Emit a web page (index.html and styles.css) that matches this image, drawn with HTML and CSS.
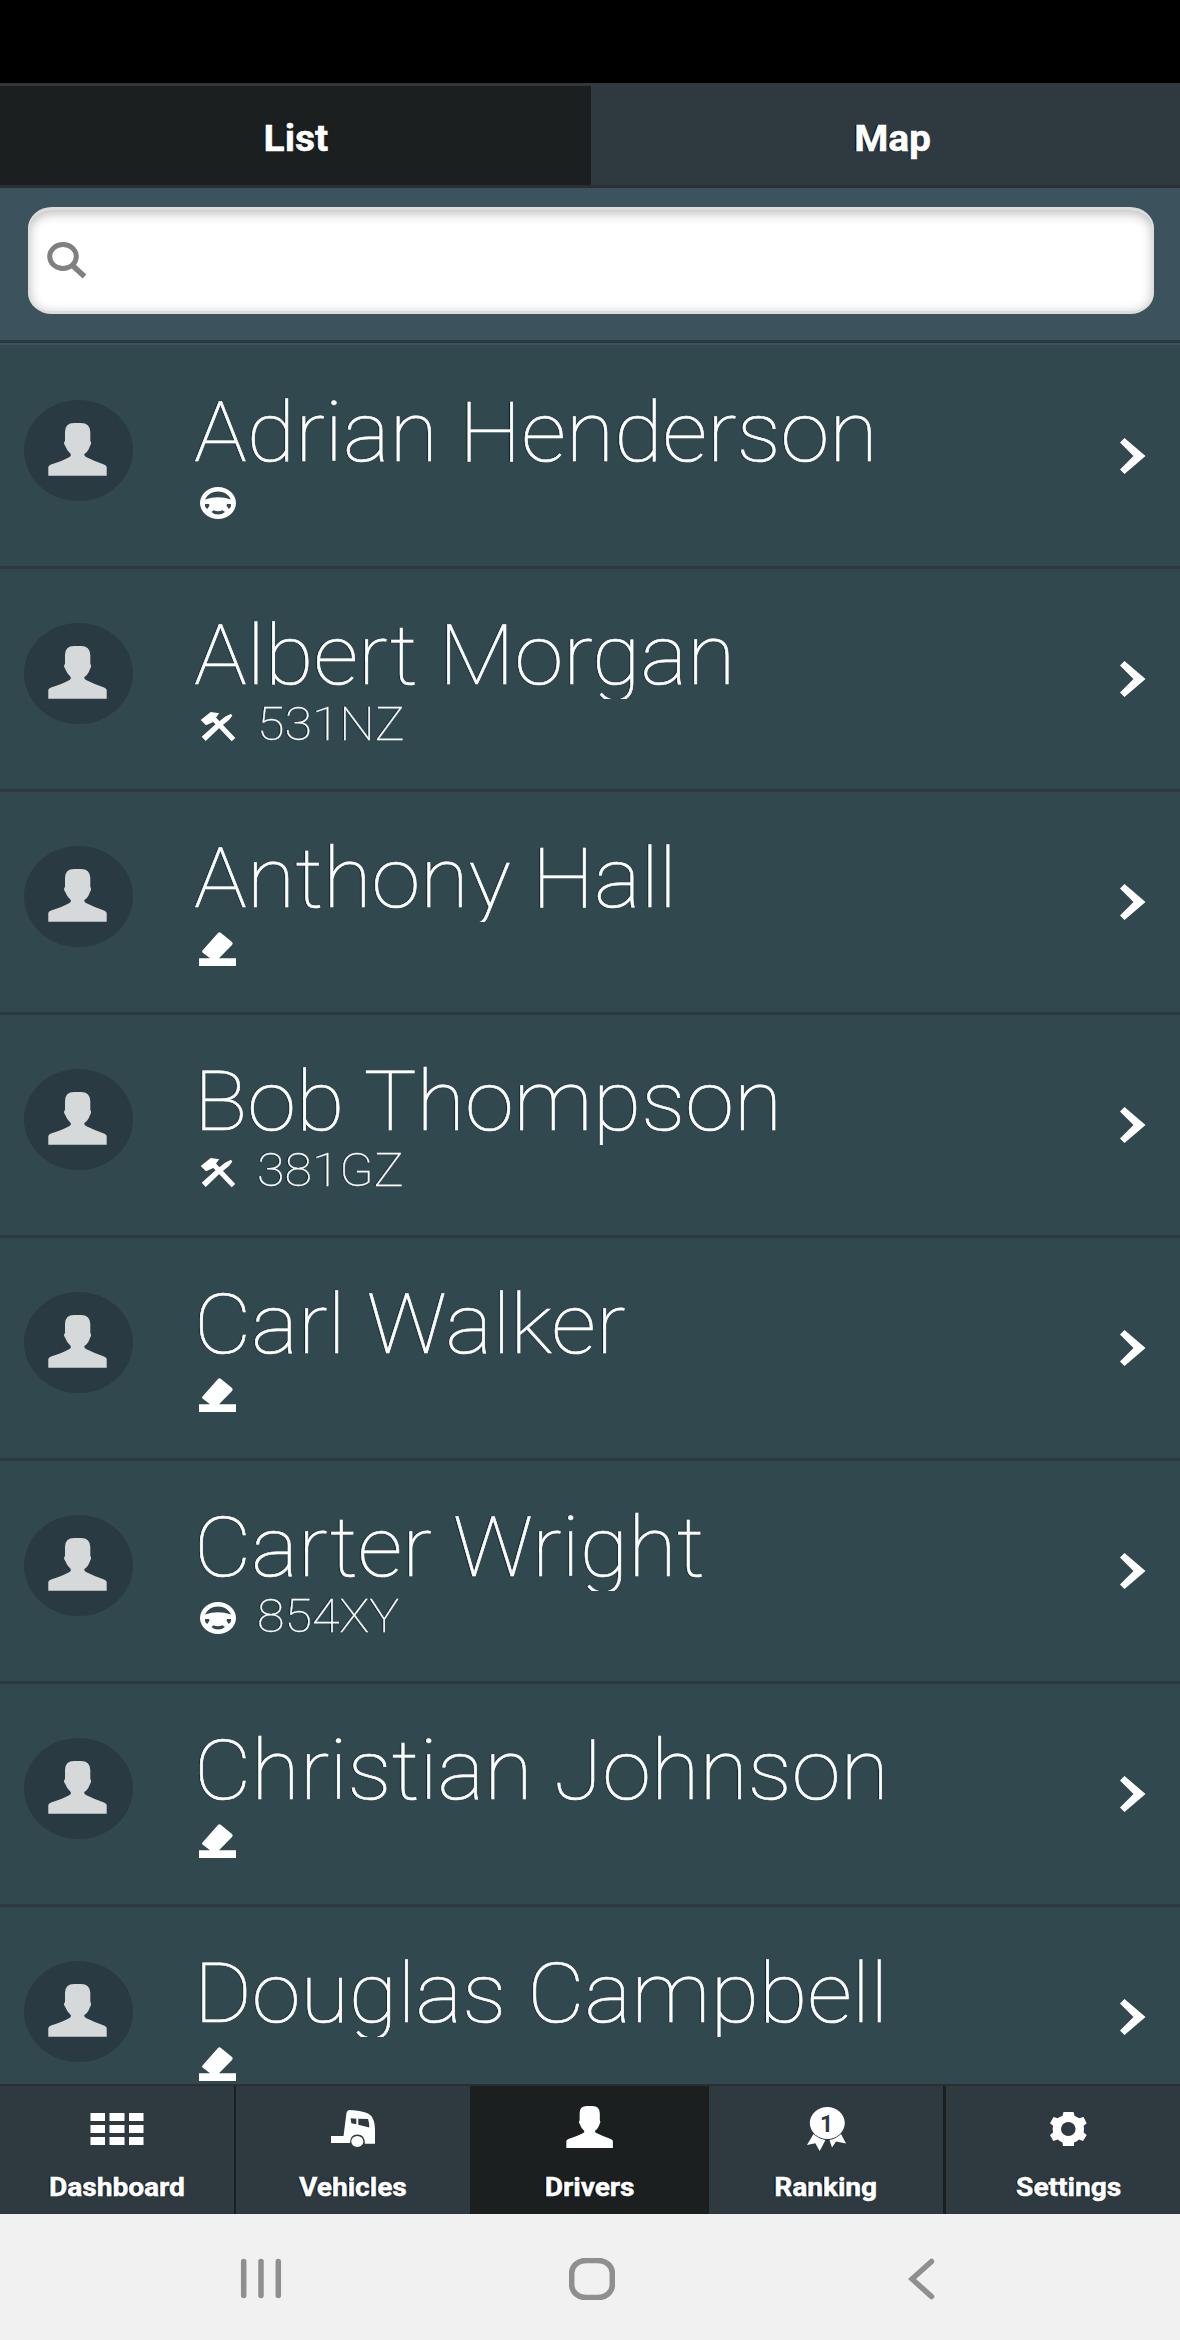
FILE: index.html
```html
<!DOCTYPE html>
<html lang="en">
    <head>
        <meta charset="utf-8">
        <title>Drivers</title>
        <link rel="stylesheet" href="styles.css">
    </head>
    <body>
        <!-- shared icons -->
        <svg class="sprite">
            <symbol id="person" viewBox="0 0 60 54">
                <path d="M17 9Q17 0 26 0H33Q42 0 42.300 9V18Q44 20 42 23Q40 29 36.300 31Q36 33 38 34Q46 38 56 41.500Q58.700 42.500 58.700 44V52.700H.3V44Q.3 42.500 3 41.500Q14 38 21.500 34Q23.500 33 22.700 31Q19 28 17 22.500Q15 20 17 18Z"/>
            </symbol>
            <symbol id="wheel" viewBox="0 0 40 36">
                <path fill-rule="evenodd" d="M20 2A18 16 0 0 1 20 34A18 16 0 0 1 20 2ZM7 14.500Q20 10 33 14.500Q29 6.500 20 6.500Q11 6.500 7 14.500ZM7 19V21Q7.500 23 9.300 24L11.500 20.500L11 19ZM33 19V21Q32.500 23 30.700 24L28.500 20.500L29 19ZM13.500 27L15.500 25.300Q20 27 24.500 25.300L27 27Q24 29.500 20 29.500Q16 29.500 13.500 27Z"/>
            </symbol>
            <symbol id="tools" viewBox="0 0 40 36">
                <path d="M2.700 12L12.700 4L21.300 5.300L18 9.500L37.300 30L33.700 33.300L15.300 14L8 17.300Z"/>
                <path d="M33 5.700L34.300 7.700L31 12L22 19.300L7.700 33L3.700 28.700L17 16.700L27 8.700Z"/>
            </symbol>
            <symbol id="rest" viewBox="0 0 40 36">
                <path d="M4.500 19.500L20 2Q21.300 .5 23 2L34 11Q35.500 12.300 34 14L21 27.300H38V35H1V27.300H12L4.500 21.500Q3.500 20.500 4.500 19.500Z"/>
            </symbol>
            <symbol id="chevron" viewBox="0 0 28 38">
                <path d="M1 5.500L5.500 1L26.500 19L5.500 37L1 32.500L14.500 19Z"/>
            </symbol>
        </svg>

        <div class="status-bar"></div>

        <div class="tabs">
            <div class="tab active"><span>List</span></div>
            <div class="tab"><span>Map</span></div>
        </div>

        <div class="search">
            <div class="search-box">
                <svg width="42" height="38" viewBox="0 0 42 38" fill="none" stroke="#808080">
                    <ellipse cx="17" cy="15.500" rx="13.300" ry="12" stroke-width="5"/>
                    <path d="M26 24L38.500 35.500" stroke-width="5.500"/>
                </svg>
            </div>
        </div>

        <div class="list">
            <div class="driver">
                <div class="avatar"><svg><use href="#person"/></svg></div>
                <div class="info">
                    <div class="name"><span>Adrian Henderson</span></div>
                    <div class="state"><svg><use href="#wheel"/></svg></div>
                </div>
                <svg class="chevron"><use href="#chevron"/></svg>
            </div>
            <div class="driver">
                <div class="avatar"><svg><use href="#person"/></svg></div>
                <div class="info">
                    <div class="name"><span>Albert Morgan</span></div>
                    <div class="state"><svg><use href="#tools"/></svg><span>531NZ</span></div>
                </div>
                <svg class="chevron"><use href="#chevron"/></svg>
            </div>
            <div class="driver">
                <div class="avatar"><svg><use href="#person"/></svg></div>
                <div class="info">
                    <div class="name"><span>Anthony Hall</span></div>
                    <div class="state"><svg><use href="#rest"/></svg></div>
                </div>
                <svg class="chevron"><use href="#chevron"/></svg>
            </div>
            <div class="driver">
                <div class="avatar"><svg><use href="#person"/></svg></div>
                <div class="info">
                    <div class="name"><span>Bob Thompson</span></div>
                    <div class="state"><svg><use href="#tools"/></svg><span>381GZ</span></div>
                </div>
                <svg class="chevron"><use href="#chevron"/></svg>
            </div>
            <div class="driver">
                <div class="avatar"><svg><use href="#person"/></svg></div>
                <div class="info">
                    <div class="name"><span>Carl Walker</span></div>
                    <div class="state"><svg><use href="#rest"/></svg></div>
                </div>
                <svg class="chevron"><use href="#chevron"/></svg>
            </div>
            <div class="driver">
                <div class="avatar"><svg><use href="#person"/></svg></div>
                <div class="info">
                    <div class="name"><span>Carter Wright</span></div>
                    <div class="state"><svg><use href="#wheel"/></svg><span>854XY</span></div>
                </div>
                <svg class="chevron"><use href="#chevron"/></svg>
            </div>
            <div class="driver">
                <div class="avatar"><svg><use href="#person"/></svg></div>
                <div class="info">
                    <div class="name"><span>Christian Johnson</span></div>
                    <div class="state"><svg><use href="#rest"/></svg></div>
                </div>
                <svg class="chevron"><use href="#chevron"/></svg>
            </div>
            <div class="driver">
                <div class="avatar"><svg><use href="#person"/></svg></div>
                <div class="info">
                    <div class="name"><span>Douglas Campbell</span></div>
                    <div class="state"><svg><use href="#rest"/></svg></div>
                </div>
                <svg class="chevron"><use href="#chevron"/></svg>
            </div>
        </div>

        <div class="nav">
            <div class="nav-item">
                <div class="nav-icon">
                    <svg width="54" height="34" viewBox="0 0 54 34">
                        <path d="M.5 1H15V9H.5ZM19.500 1H34.500V9H19.500ZM39 1H53.500V9H39ZM.5 13H15V21H.5ZM19.500 13H34.500V21H19.500ZM39 13H53.500V21H39ZM.5 25H15V33H.5ZM19.500 25H34.500V33H19.500ZM39 25H53.500V33H39Z"/>
                    </svg>
                </div>
                <span>Dashboard</span>
            </div>
            <div class="nav-item">
                <div class="nav-icon">
                    <svg width="46" height="40" viewBox="0 0 46 40">
                        <path fill-rule="evenodd" d="M1 27H13.500L16.500 4Q17 1 20 1Q32 1.500 38 4.500Q41 6 42 8Q45 13 45 21V34.700H34.800Q35 25.500 27.300 25.500Q20 25.500 20 34H1ZM20.700 9.300L21.300 14.300L26.300 15.300V9.700ZM28.300 9.700V15.700L39.300 18.500Q39.500 14 38 10Z"/>
                        <ellipse cx="27.300" cy="32.400" rx="6" ry="5.500"/>
                    </svg>
                </div>
                <span>Vehicles</span>
            </div>
            <div class="nav-item active">
                <div class="nav-icon"><svg width="48" height="43"><use href="#person"/></svg></div>
                <span>Drivers</span>
            </div>
            <div class="nav-item">
                <div class="nav-icon">
                    <svg width="43" height="48" viewBox="0 0 43 48">
                        <ellipse cx="22.300" cy="18" rx="17.500" ry="16"/>
                        <path d="M8.500 29L2 40L10.300 38.300L14.700 46L20.500 35Q13.500 34 8.500 29ZM24.500 35L27 42.500L31 36.500L41 38.500L36 29Q31 34 24.500 35Z"/>
                        <text x="21.500" y="26.500" text-anchor="middle">1</text>
                    </svg>
                </div>
                <span>Ranking</span>
            </div>
            <div class="nav-item">
                <div class="nav-icon">
                    <svg width="39" height="36" viewBox="0 0 39 36">
                        <path fill-rule="evenodd" d="M14.500 1H24.500L25.700 5Q28 5.700 30 7.300L34.500 6L37.700 12.300L34.700 14.700Q35.300 18 34.700 21.500L37.700 24L34 30L30 28.500Q28 30.500 25 31.500V35H14L13.500 31.500Q11 30.500 8.700 28.500L4.300 30L1 24L4 21.500Q3.300 18 4 14.700L1 12.300L4.500 6L8.700 7.300Q11 5.500 13.500 5ZM12 18A7.300 7 0 0 0 26.600 18A7.300 7 0 0 0 12 18Z"/>
                    </svg>
                </div>
                <span>Settings</span>
            </div>
        </div>

        <!-- android buttons -->
        <div class="system-bar">
            <svg width="42" height="42" viewBox="0 0 42 42"><path d="M3.700 3.500V37.500M21 3.500V37.500M38.300 3.500V37.500"/></svg>
            <svg class="home" width="46" height="42" viewBox="0 0 46 42"><rect x="2.700" y="2.500" width="40.600" height="37" rx="14" ry="12.500"/></svg>
            <svg width="28" height="42" viewBox="0 0 28 42"><path d="M23.500 3.500L4 21L23.500 38.500"/></svg>
        </div>
    </body>
</html>
```
FILE: styles.css
```css
* {
    box-sizing: border-box;
}
body {
    margin: 0;
    width: 1180px;
    height: 2340px;
    display: flex;
    flex-direction: column;
    overflow: hidden;
    font-family: Roboto, sans-serif;
    color: #fff;
    background: #31484e;
}
svg {
    display: block;
    flex: none;
    fill: #fff;
}
.sprite {
    display: none;
}
.status-bar {
    flex: none;
    height: 83px;
    background: #000;
}

/* top tabs */
.tabs {
    flex: none;
    display: flex;
    height: 105px;
    border-top: 3px solid #2e393d;
    border-bottom: 3px solid #2c2f31;
    background: #2e3a3f;
}
.tab {
    flex: 1;
    display: flex;
    align-items: center;
    justify-content: center;
    padding: 7px 0 0 14px;
    font-size: 36px;
    font-weight: 700;
    -webkit-text-stroke: 0.500px #fff;
    text-shadow: -1px 0 1px #000;
}
.tab.active {
    flex: none;
    width: 591px;
    padding-left: 0;
    background: #1c1f20;
}
.tab span {
    transform: scaleX(1.08);
}

.search {
    flex: none;
    height: 155px;
    padding: 19px 26px 0 28px;
    border-bottom: 3px solid #2b3a41;
    background: #3c535d;
}
.search-box {
    height: 107px;
    padding: 31px 0 0 17px;
    border: solid #dcdcdc;
    border-width: 3px 1px;
    border-radius: 24px / 21px;
    background: #fff;
    box-shadow: inset 0 3px 12px rgba(0, 0, 0, 0.28);
}
.search-box svg {
    fill: none;
}

/* driver rows */
.list {
    flex: none;
    height: 1741px;
    overflow: hidden;
    border-top: 2px solid #3c535d;
    padding-top: 1px;
}
.driver {
    display: flex;
    height: 223px;
    border-bottom: 3px solid #2b3a41;
}
.avatar {
    flex: none;
    width: 109px;
    height: 101px;
    margin: 54px 0 0 24px;
    padding: 23px 0 0 24px;
    border-radius: 50%;
    background: #2a3a42;
}
.avatar svg {
    width: 60px;
    height: 54px;
    fill: #d5d9da;
}
.info {
    flex: 1;
    margin-left: 61px;
    padding-top: 43px;
}
.name {
    height: 87px;
    line-height: 87px;
    overflow: hidden;
    font-size: 83px;
    font-weight: 100;
    white-space: nowrap;
    -webkit-text-stroke: 0.600px #fff;
    text-shadow: -1px 0 1px #06202a;
}
.name span, .state span {
    display: inline-block;
    transform: scaleX(1.065);
    transform-origin: left;
}
.state {
    display: flex;
    height: 50px;
    padding-left: 4px;
    line-height: 50px;
    font-size: 46px;
    font-weight: 100;
    -webkit-text-stroke: 0.300px #fff;
    text-shadow: -1px 0 1px #06202a;
}
.state span {
    transform: scaleX(1.09);
}
.state svg {
    width: 40px;
    height: 36px;
    margin: 9px 19px 0 0;
}
.driver .chevron {
    width: 28px;
    height: 38px;
    margin: 91px 33px 0 0;
}

/* bottom menu */
.nav {
    flex: none;
    display: flex;
    height: 130px;
    border-top: 2px solid #2c2f31;
    background: #2e3a3f;
}
.nav-item {
    flex: none;
    width: 236px;
    display: flex;
    flex-direction: column;
    align-items: center;
    border-right: 2px solid #1c1f20;
    font-size: 26px;
    font-weight: 700;
    text-shadow: -1px 0 1px #000;
}
.nav-item:nth-child(2) {
    width: 234px;
    border-right: 0;
}
.nav-item.active {
    width: 239px;
    border-right: 0;
    background: #1c1f20;
}
.nav-item:nth-child(4) {
    width: 237px;
    border-right-width: 3px;
}
.nav-item:last-child {
    flex: 1;
    padding-left: 11px;
    border-right: 0;
}
.nav-icon {
    display: flex;
    align-items: center;
    height: 85px;
}
.nav-item:nth-child(3) .nav-icon {
    height: 82px;
    margin-bottom: 3px;
}
.nav-icon text {
    font-size: 23px;
    font-weight: 700;
    text-shadow: none;
    fill: #2e3a3f;
}
.nav-item span {
    line-height: 32px;
    transform: scaleX(1.08);
    -webkit-text-stroke: 0.500px #fff;
}

.system-bar {
    flex: 1;
    display: flex;
    align-items: center;
    justify-content: space-between;
    padding: 4px 244px 0 240px;
    background: #f1f1f1;
}
.system-bar svg {
    fill: none;
    stroke: #8f8f8f;
    stroke-width: 5.500px;
    stroke-linecap: round;
}
.system-bar .home {
    margin-right: 7px;
}
```
